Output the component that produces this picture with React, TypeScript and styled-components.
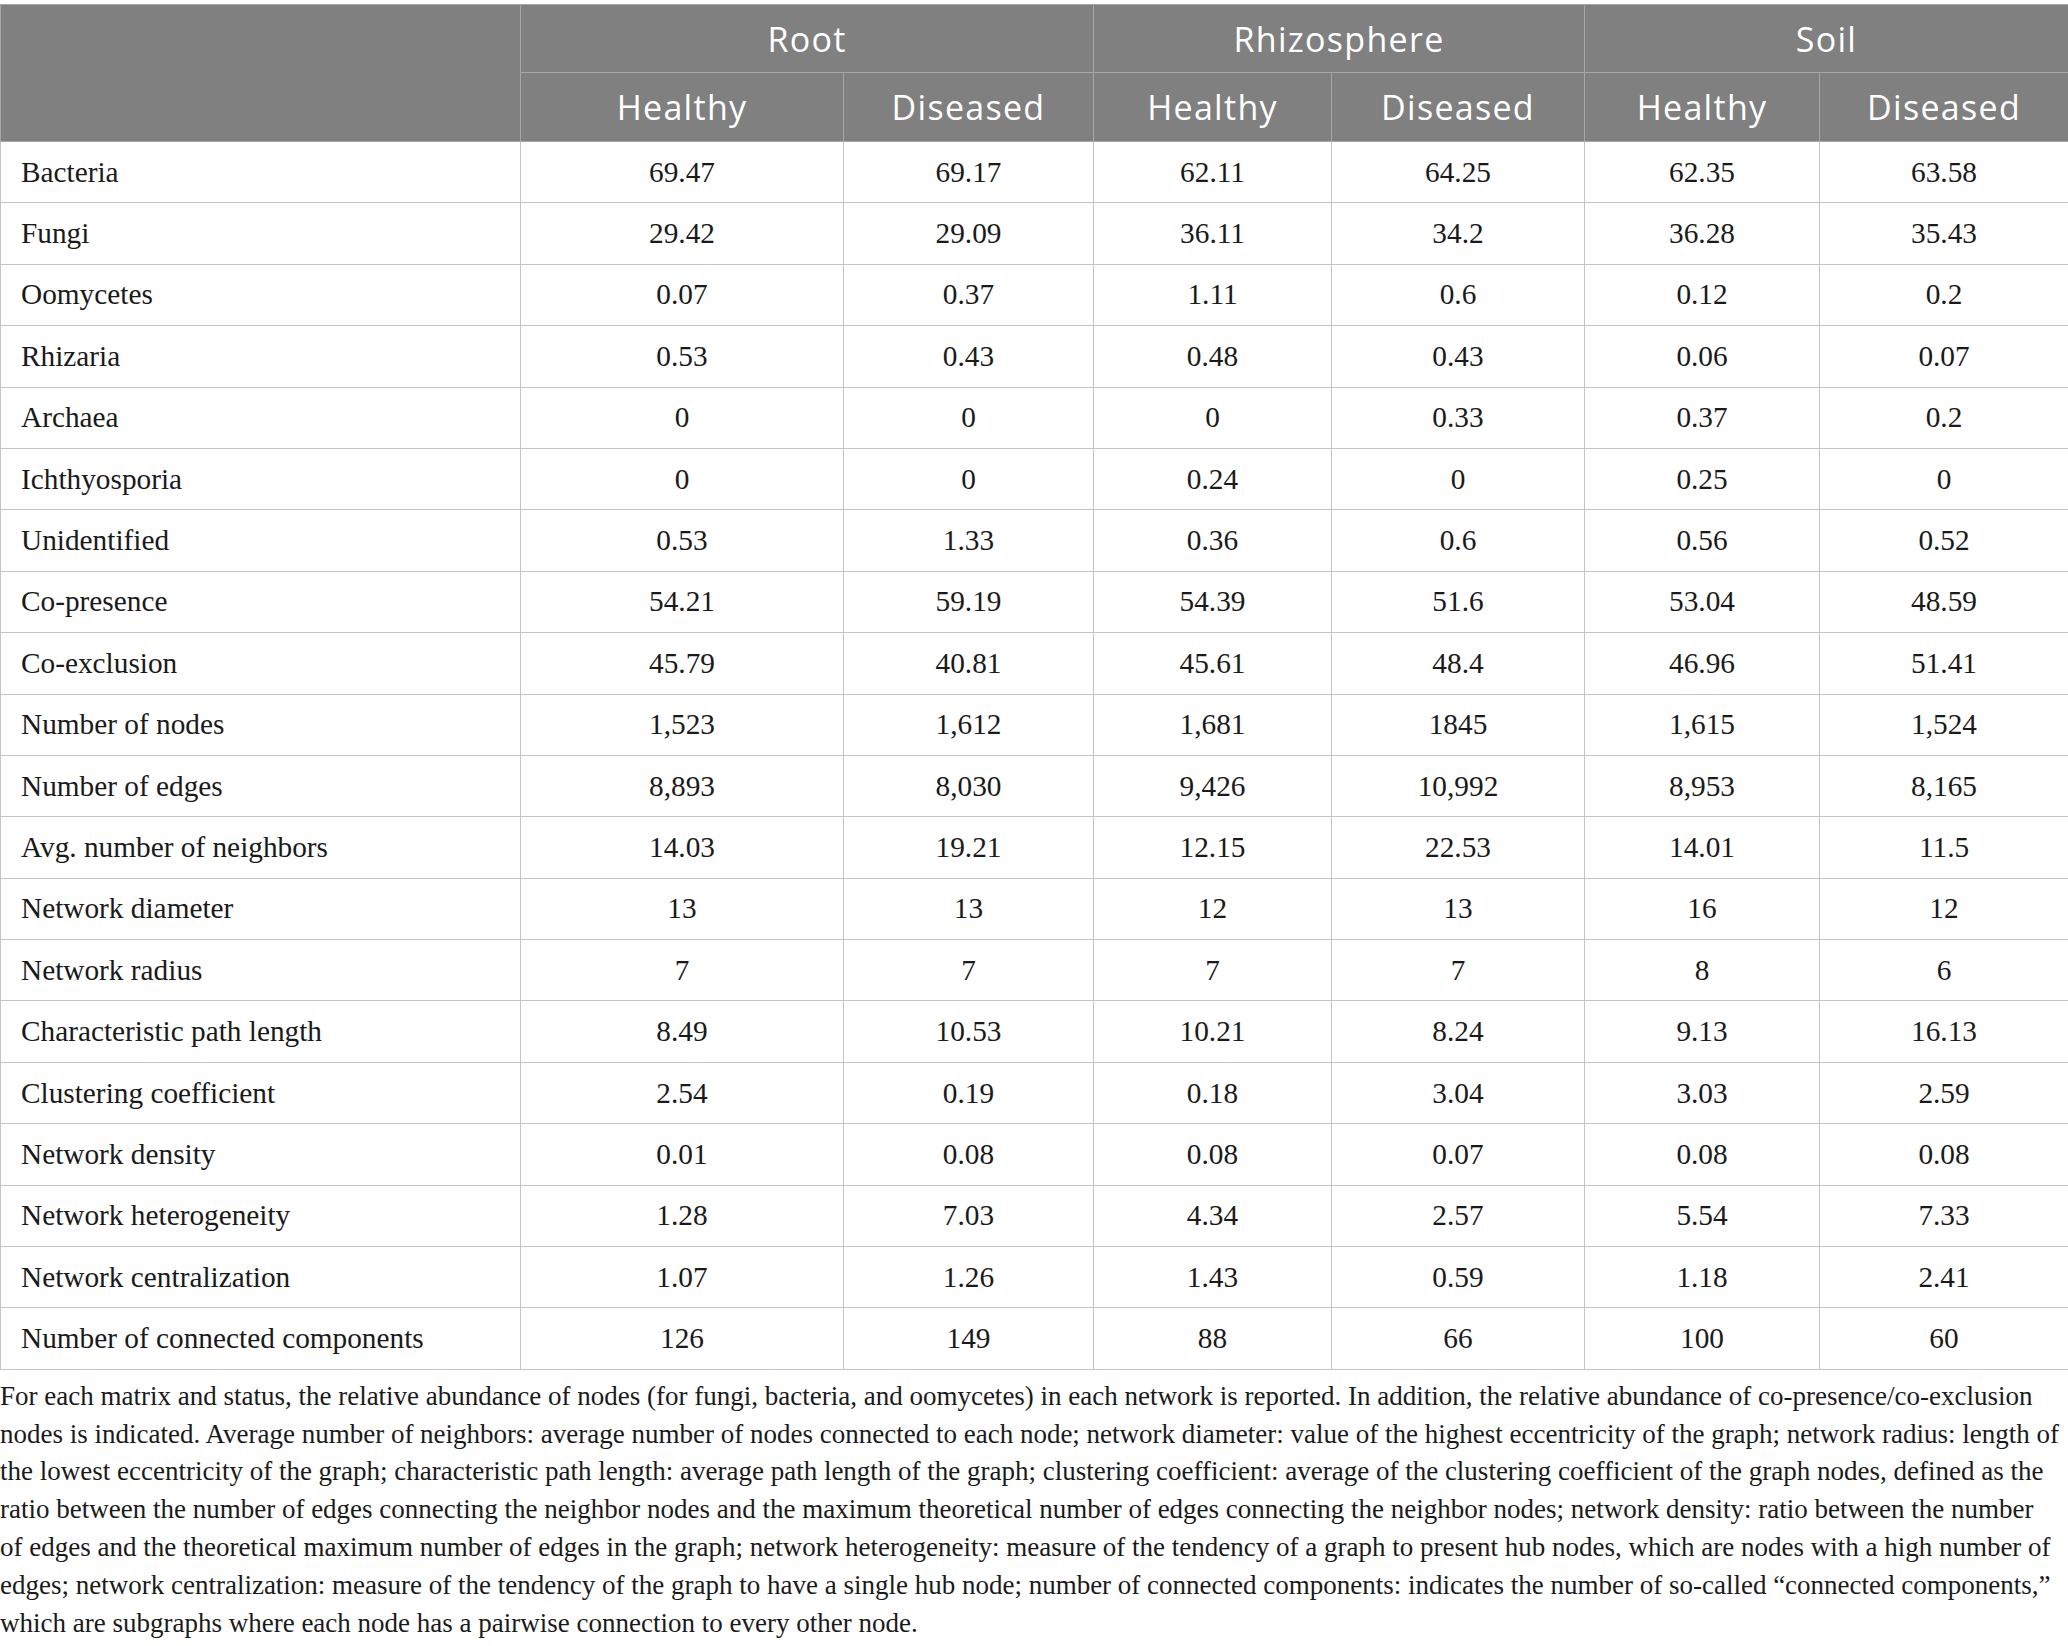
import React from "react";
import styled, { createGlobalStyle } from "styled-components";

const GlobalStyle = createGlobalStyle`
  html, body { margin: 0; padding: 0; background: #ffffff; }
  body { width: 2068px; }
`;

const Page = styled.div`
  padding-top: 4px;
  width: 2068px;
`;

const Table = styled.table`
  width: 2068px;
  border-collapse: collapse;
  table-layout: fixed;
`;

const HeadRow = styled.tr<{ $h: number }>`
  height: ${(p) => p.$h}px;
  background: #7f807f;
`;

const HeadCell = styled.th`
  border: 1px solid #a6a7a6;
  color: #ffffff;
  font-family: "Open Sans", "Noto Sans", sans-serif;
  font-weight: 400;
  font-size: 34px;
  letter-spacing: 1.3px;
  text-align: center;
  vertical-align: middle;
  padding: 0;
  line-height: 1;
`;

const BodyRow = styled.tr`
  height: 61.4px;
`;

const LabelCell = styled.td`
  border: 1px solid #c4c4c4;
  font-family: "Liberation Serif", "Times New Roman", serif;
  font-size: 29.3px;
  color: #1a1a1a;
  padding: 0 0 0 20px;
  text-align: left;
  vertical-align: middle;
  white-space: nowrap;
`;

const ValueCell = styled(LabelCell)`
  padding: 0;
  text-align: center;
`;

const Note = styled.div`
  margin: 8px 0 0 0;
  width: 2068px;
  font-family: "Liberation Serif", "Times New Roman", serif;
  font-size: 27px;
  line-height: 37.8px;
  color: #1a1a1a;
`;

const NoteLine = styled.span`
  display: block;
  white-space: nowrap;
`;

const widths = [520, 323, 250, 238, 253, 235, 249];

const rows: [string, string[]][] = [
  ["Bacteria", ["69.47", "69.17", "62.11", "64.25", "62.35", "63.58"]],
  ["Fungi", ["29.42", "29.09", "36.11", "34.2", "36.28", "35.43"]],
  ["Oomycetes", ["0.07", "0.37", "1.11", "0.6", "0.12", "0.2"]],
  ["Rhizaria", ["0.53", "0.43", "0.48", "0.43", "0.06", "0.07"]],
  ["Archaea", ["0", "0", "0", "0.33", "0.37", "0.2"]],
  ["Ichthyosporia", ["0", "0", "0.24", "0", "0.25", "0"]],
  ["Unidentified", ["0.53", "1.33", "0.36", "0.6", "0.56", "0.52"]],
  ["Co-presence", ["54.21", "59.19", "54.39", "51.6", "53.04", "48.59"]],
  ["Co-exclusion", ["45.79", "40.81", "45.61", "48.4", "46.96", "51.41"]],
  ["Number of nodes", ["1,523", "1,612", "1,681", "1845", "1,615", "1,524"]],
  ["Number of edges", ["8,893", "8,030", "9,426", "10,992", "8,953", "8,165"]],
  ["Avg. number of neighbors", ["14.03", "19.21", "12.15", "22.53", "14.01", "11.5"]],
  ["Network diameter", ["13", "13", "12", "13", "16", "12"]],
  ["Network radius", ["7", "7", "7", "7", "8", "6"]],
  ["Characteristic path length", ["8.49", "10.53", "10.21", "8.24", "9.13", "16.13"]],
  ["Clustering coefficient", ["2.54", "0.19", "0.18", "3.04", "3.03", "2.59"]],
  ["Network density", ["0.01", "0.08", "0.08", "0.07", "0.08", "0.08"]],
  ["Network heterogeneity", ["1.28", "7.03", "4.34", "2.57", "5.54", "7.33"]],
  ["Network centralization", ["1.07", "1.26", "1.43", "0.59", "1.18", "2.41"]],
  ["Number of connected components", ["126", "149", "88", "66", "100", "60"]],
];

const noteLines = [
  "For each matrix and status, the relative abundance of nodes (for fungi, bacteria, and oomycetes) in each network is reported. In addition, the relative abundance of co-presence/co-exclusion",
  "nodes is indicated. Average number of neighbors: average number of nodes connected to each node; network diameter: value of the highest eccentricity of the graph; network radius: length of",
  "the lowest eccentricity of the graph; characteristic path length: average path length of the graph; clustering coefficient: average of the clustering coefficient of the graph nodes, defined as the",
  "ratio between the number of edges connecting the neighbor nodes and the maximum theoretical number of edges connecting the neighbor nodes; network density: ratio between the number",
  "of edges and the theoretical maximum number of edges in the graph; network heterogeneity: measure of the tendency of a graph to present hub nodes, which are nodes with a high number of",
  "edges; network centralization: measure of the tendency of the graph to have a single hub node; number of connected components: indicates the number of so-called “connected components,”",
  "which are subgraphs where each node has a pairwise connection to every other node.",
];

const groups = ["Root", "Rhizosphere", "Soil"];

export default function App() {
  return (
    <>
      <GlobalStyle />
      <Page>
        <Table>
          <colgroup>
            {widths.map((w, i) => (
              <col key={i} style={{ width: w }} />
            ))}
          </colgroup>
          <thead>
            <HeadRow $h={68}>
              <HeadCell rowSpan={2} />
              {groups.map((g) => (
                <HeadCell key={g} colSpan={2}>
                  {g}
                </HeadCell>
              ))}
            </HeadRow>
            <HeadRow $h={69}>
              {groups.map((g) => (
                <React.Fragment key={g}>
                  <HeadCell>Healthy</HeadCell>
                  <HeadCell>Diseased</HeadCell>
                </React.Fragment>
              ))}
            </HeadRow>
          </thead>
          <tbody>
            {rows.map(([label, vals]) => (
              <BodyRow key={label}>
                <LabelCell>{label}</LabelCell>
                {vals.map((v, i) => (
                  <ValueCell key={i}>{v}</ValueCell>
                ))}
              </BodyRow>
            ))}
          </tbody>
        </Table>
        <Note>
          {noteLines.map((l, i) => (
            <NoteLine key={i}>{l}</NoteLine>
          ))}
        </Note>
      </Page>
    </>
  );
}
